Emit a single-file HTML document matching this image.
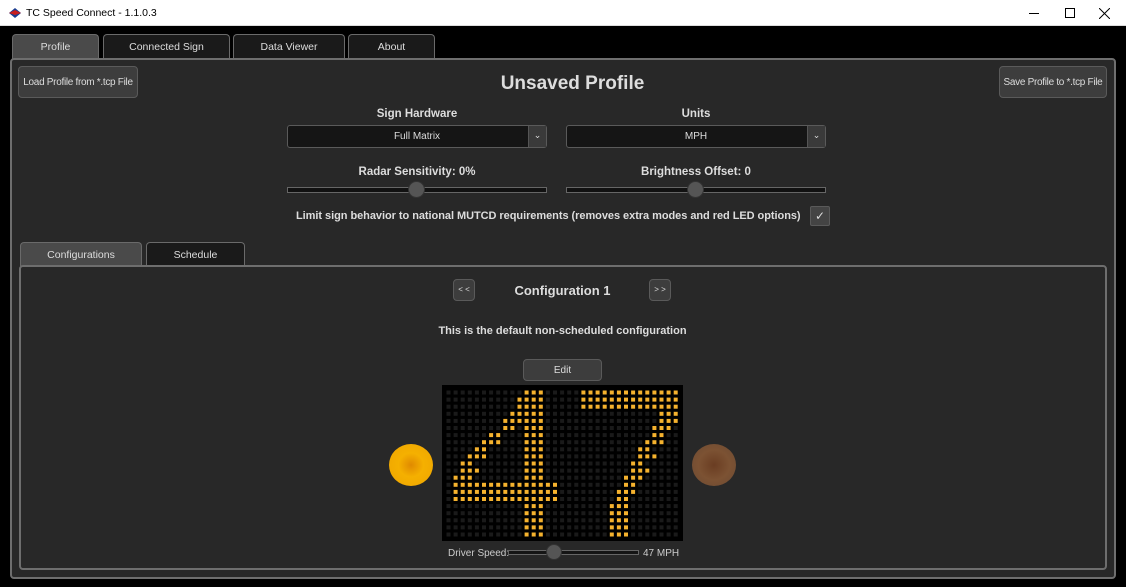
<!DOCTYPE html>
<html><head><meta charset="utf-8"><style>
*{box-sizing:border-box;margin:0;padding:0}
body{width:1126px;height:587px;background:#000;font-family:"Liberation Sans",sans-serif;position:relative;overflow:hidden;color:#ddd}
.abs{position:absolute;white-space:nowrap}
.title{left:0;top:0;width:1126px;height:26px;background:#fff;border-bottom:1px solid #ddd;color:#000;font-size:12px}
.tab{position:absolute;top:34px;height:25px;background:#1a1a1a;border:1px solid #6a6a6a;border-bottom:none;border-radius:4px 4px 0 0;font-size:10.5px;color:#ddd;text-align:center;line-height:25px;white-space:nowrap}
.panel{left:10px;top:58px;width:1106px;height:521px;background:#282828;border:2px solid #6e6e6e;border-radius:4px}
.btn{position:absolute;background:#3d3d3d;border:1px solid #5a5a5a;border-radius:4px;font-size:10px;color:#ddd;text-align:center;white-space:nowrap;overflow:hidden}
.lbl{position:absolute;font-size:11.5px;font-weight:bold;color:#ddd;text-align:center;white-space:nowrap}
.sel{position:absolute;height:23px;background:#151515;border:1px solid #5a5a5a;border-radius:3px;font-size:10px;text-align:center;line-height:21px}
.sel .ar{position:absolute;right:0;top:0;width:18px;height:21px;background:#3a3a3a;border-left:1px solid #555;font-size:9px;line-height:18px}
.track{position:absolute;height:6px;background:#111;border:1px solid #666}
.thumb{position:absolute;width:17px;height:17px;border-radius:50%;background:#555;border:1px solid #333}
</style></head><body>
<div class="abs title">
 <svg class="abs" style="left:8px;top:7px" width="14" height="12"><path d="M1 6 L7 1 L13 6 L7 11Z" fill="#1a3c8f"/><path d="M1 6 L7 3 L13 6 L7 8Z" fill="#c81e1e"/></svg>
 <span class="abs" style="left:26px;top:7px;font-size:10.5px">TC Speed Connect - 1.1.0.3</span>
 <div class="abs" style="left:1029px;top:13px;width:10px;height:1px;background:#000"></div>
 <div class="abs" style="left:1065px;top:8px;width:10px;height:10px;border:1px solid #000"></div>
 <svg class="abs" style="left:1099px;top:8px" width="11" height="11"><path d="M0 0L11 11M11 0L0 11" stroke="#000" stroke-width="1"/></svg>
</div>
<div class="tab" style="left:12px;width:87px;background:#4a4a4a">Profile</div>
<div class="tab" style="left:103px;width:127px">Connected Sign</div>
<div class="tab" style="left:233px;width:112px">Data Viewer</div>
<div class="tab" style="left:348px;width:87px">About</div>
<div class="abs panel"></div>
<div class="btn" style="left:18px;top:66px;width:120px;height:32px;line-height:31px;letter-spacing:-0.3px">Load Profile from *.tcp File</div>
<div class="btn" style="left:999px;top:66px;width:108px;height:32px;line-height:31px;letter-spacing:-0.3px">Save Profile to *.tcp File</div>
<div class="lbl" style="left:400px;top:73px;width:345px;font-size:19px">Unsaved Profile</div>
<div class="lbl" style="left:287px;top:108px;width:260px">Sign Hardware</div>
<div class="lbl" style="left:566px;top:108px;width:260px">Units</div>
<div class="sel" style="left:287px;top:125px;width:260px">Full Matrix<div class="ar">&#8964;</div></div>
<div class="sel" style="left:566px;top:125px;width:260px">MPH<div class="ar">&#8964;</div></div>
<div class="lbl" style="left:287px;top:166px;width:260px">Radar Sensitivity: 0%</div>
<div class="lbl" style="left:566px;top:166px;width:260px">Brightness Offset: 0</div>
<div class="track" style="left:287px;top:187px;width:260px"></div>
<div class="thumb" style="left:408px;top:181px"></div>
<div class="track" style="left:566px;top:187px;width:260px"></div>
<div class="thumb" style="left:687px;top:181px"></div>
<div class="lbl" style="left:296px;top:210px;width:502px;text-align:left;font-size:11px;letter-spacing:-0.05px">Limit sign behavior to national MUTCD requirements (removes extra modes and red LED options)</div>
<div class="abs" style="left:810px;top:206px;width:20px;height:20px;background:#444;border:1px solid #5a5a5a;border-radius:2px;color:#ddd;font-size:12px;text-align:center;line-height:18px">&#10003;</div>
<div class="tab" style="left:20px;top:242px;width:122px;height:24px;line-height:24px;background:#4a4a4a">Configurations</div>
<div class="tab" style="left:146px;top:242px;width:99px;height:24px;line-height:24px">Schedule</div>
<div class="abs" style="left:19px;top:265px;width:1088px;height:305px;border:2px solid #6e6e6e;border-radius:4px;background:#282828"></div>
<div class="btn" style="left:453px;top:279px;width:22px;height:22px;line-height:20px;font-size:8px">&lt; &lt;</div>
<div class="btn" style="left:649px;top:279px;width:22px;height:22px;line-height:20px;font-size:8px">&gt; &gt;</div>
<div class="lbl" style="left:480px;top:283px;width:165px;font-size:13px">Configuration 1</div>
<div class="lbl" style="left:380px;top:325px;width:365px;font-size:11px">This is the default non-scheduled configuration</div>
<div class="btn" style="left:523px;top:359px;width:79px;height:22px;line-height:21px">Edit</div>
<div class="abs" style="left:389px;top:444px;width:44px;height:42px;border-radius:50%;background:radial-gradient(ellipse at 50% 50%,#e08a00 0%,#f5b000 40%,#f0a800 80%,#c98800 100%)"></div>
<div class="abs" style="left:692px;top:444px;width:44px;height:42px;border-radius:50%;background:radial-gradient(ellipse at 50% 50%,#6a3d22 0%,#7c5233 50%,#6b4a33 100%)"></div>
<svg class="abs" id="m" style="left:442px;top:385px" width="241" height="156"><rect width="241" height="156" fill="#000"/></svg>
<span class="abs" style="left:448px;top:548px;font-size:10px;color:#ccc">Driver Speed:</span>
<div class="track" style="left:508px;top:550px;width:131px;height:5px;background:#151515"></div>
<div class="thumb" style="left:546px;top:544px;width:16px;height:16px"></div>
<span class="abs" style="left:643px;top:548px;font-size:10px;color:#ccc">47 MPH</span>
<script>
var on={};function s(r,a,b){for(var c=a;c<=b;c++)on[r+','+c]=1}
for(var r=0;r<21;r++)s(r,11,13);
s(1,10,10);s(2,10,10);s(3,9,10);s(4,8,10);s(5,8,9);s(6,6,7);s(7,5,7);s(8,4,5);s(9,3,5);s(10,2,3);s(11,2,4);s(12,1,3);
for(r=13;r<16;r++)s(r,1,15);
s(0,19,32);s(1,19,32);s(2,19,32);s(3,30,32);s(4,30,32);s(5,29,31);s(6,29,30);s(7,28,30);s(8,27,28);s(9,27,29);s(10,26,27);s(11,26,28);s(12,25,27);s(13,25,26);s(14,24,26);s(15,24,25);
for(r=16;r<21;r++)s(r,23,25);
var h='';for(r=0;r<21;r++)for(var c=0;c<33;c++){var x=4.5+c*7.1,y=5.5+r*7.1;h+='<rect x="'+x.toFixed(1)+'" y="'+y.toFixed(1)+'" width="4" height="4" fill="'+(on[r+','+c]?'#f5b22e':'#1a1a1a')+'"/>'}
document.getElementById('m').insertAdjacentHTML('beforeend',h);
</script>
</body></html>
